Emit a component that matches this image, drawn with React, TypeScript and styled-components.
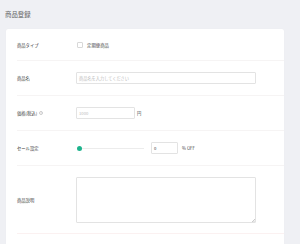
import React from "react";
import styled, { createGlobalStyle } from "styled-components";

const Global = createGlobalStyle`
  html, body { margin: 0; padding: 0; background: #eff0f4; }
  body { font-family: "Noto Sans CJK JP", "Noto Sans", sans-serif; color: #444; }
  * { box-sizing: border-box; }
`;

const Page = styled.div`
  width: 300px;
  height: 244px;
  overflow: hidden;
  padding: 0 16px 0 6px;
`;

const Title = styled.h1`
  margin: 0 0 0 -1px;
  height: 29px;
  display: flex;
  align-items: center;
  font-size: 6.4px;
  font-weight: 400;
  color: #666;
`;

const Card = styled.div`
  background: #fff;
  border-radius: 2px;
  box-shadow: 0 0 1px rgba(0, 0, 0, 0.06);
  padding: 0 0 0 11px;
`;

const Row = styled.div<{ $h: number; $last?: boolean }>`
  display: flex;
  align-items: center;
  height: ${(p) => p.$h}px;
  border-bottom: 1px solid ${(p) => (p.$last ? "#fbf1f1" : "#f6f4f4")};
`;

const Label = styled.div`
  width: 59px;
  flex: none;
  font-size: 4.3px;
  color: #3a3a3a;
  display: flex;
  align-items: center;
  gap: 2px;
`;

const Help = styled.span`
  width: 4px;
  height: 4px;
  border-radius: 50%;
  border: 0.5px solid #ccc;
  color: #bbb;
  font-size: 3px;
  display: inline-flex;
  align-items: center;
  justify-content: center;
`;

const Box = styled.span`
  width: 6px;
  height: 6px;
  border: 1px solid #d8d8d8;
  border-radius: 1px;
  margin-left: 1px;
  margin-right: 4px;
`;

const Small = styled.span`
  font-size: 4.4px;
  color: #444;
`;

const Field = styled.div<{ $w: number; $h?: number }>`
  width: ${(p) => p.$w}px;
  height: ${(p) => p.$h ?? 12}px;
  border: 1px solid #e3e3e3;
  border-radius: 1px;
  font-size: 4.2px;
  color: #bbb;
  padding: 0 2px;
  display: flex;
  align-items: center;
  position: relative;
  flex: none;
`;

const Value = styled.span`
  color: #333;
`;

const Grip = styled.svg`
  position: absolute;
  right: 0;
  bottom: 0;
`;

const Unit = styled.span<{ $ml: number }>`
  margin-left: ${(p) => p.$ml}px;
  font-size: 4.3px;
  color: #444;
`;

const Slider = styled.div`
  width: 67px;
  height: 6px;
  margin-left: 1px;
  margin-right: 7px;
  position: relative;
  display: flex;
  align-items: center;
  &::before {
    content: "";
    position: absolute;
    left: 2px;
    right: 0;
    height: 1px;
    background: #ececec;
  }
`;

const Thumb = styled.span`
  position: absolute;
  left: 0;
  width: 5px;
  height: 5px;
  border-radius: 50%;
  background: #1db38c;
`;

export default function App() {
  return (
    <Page>
      <Global />
      <Title>商品登録</Title>
      <Card>
        <Row $h={32}>
          <Label>商品タイプ</Label>
          <Box />
          <Small>定期便商品</Small>
        </Row>
        <Row $h={35}>
          <Label>商品名</Label>
          <Field $w={180}>商品名を入力してください</Field>
        </Row>
        <Row $h={35}>
          <Label>
            価格(税込)<Help>?</Help>
          </Label>
          <Field $w={59}>1000</Field>
          <Unit $ml={2}>円</Unit>
        </Row>
        <Row $h={35}>
          <Label>セール設定</Label>
          <Slider>
            <Thumb />
          </Slider>
          <Field $w={27}>
            <Value>0</Value>
          </Field>
          <Unit $ml={4}>% OFF</Unit>
        </Row>
        <Row $h={68} $last>
          <Label>商品説明</Label>
          <Field $w={180} $h={46}>
            <Grip width="4" height="4" viewBox="0 0 4 4">
              <path d="M4 1 L1 4 M4 2.5 L2.5 4" stroke="#aaa" strokeWidth="0.6" />
            </Grip>
          </Field>
        </Row>
        <Row $h={20} />
      </Card>
    </Page>
  );
}
